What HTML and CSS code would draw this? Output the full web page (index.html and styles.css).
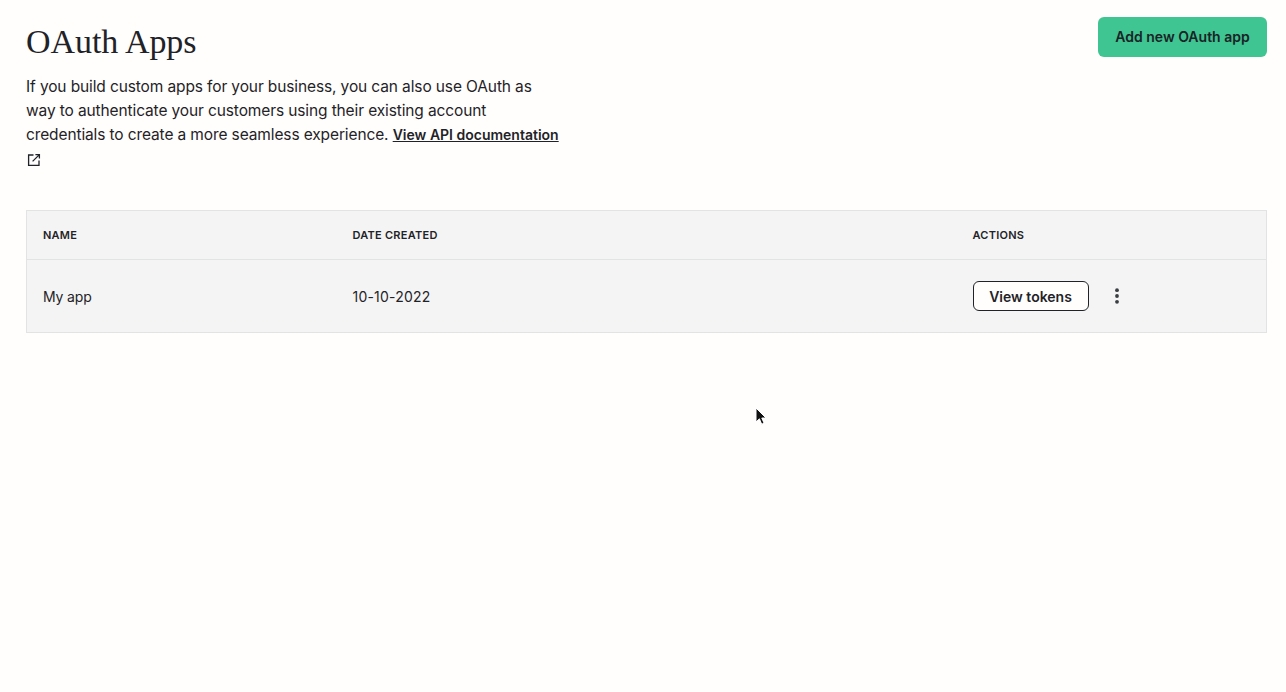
FILE: index.html
```html
<!DOCTYPE html>
<html lang="en">
<head>
<meta charset="utf-8">
<title>OAuth Apps</title>
<link rel="stylesheet" href="styles.css">
</head>
<body>
<main class="page">
  <header class="head">
    <div class="intro">
      <h1 class="title">OAuth Apps</h1>
      <p class="desc">If you build custom apps for your business, you can also use OAuth as way to authenticate your customers using their existing account credentials to create a more seamless experience. <a class="doc-link" href="#">View API documentation</a> <svg class="ext" viewBox="0 0 14 14" width="14" height="14" fill="none" stroke="#1f2327" stroke-width="1.3"><path d="M6.5 2H1.6v10.4h10.4V7.5"/><path d="M5.6 8.4 12.4 1.6M8.4 1.6h4v4"/></svg></p>
    </div>
    <button class="btn-primary">Add new OAuth app</button>
  </header>
  <table class="apps">
    <thead>
      <tr><th class="col-name">Name</th><th class="col-date">Date created</th><th>Actions</th></tr>
    </thead>
    <tbody>
      <tr>
        <td class="name">My app</td>
        <td class="date">10-10-2022</td>
        <td>
          <div class="actions">
            <button class="btn-outline">View tokens</button>
            <svg class="more" viewBox="0 0 4 16" width="4" height="16" fill="#3a3e42"><circle cx="2" cy="2.2" r="1.9"/><circle cx="2" cy="8" r="1.9"/><circle cx="2" cy="13.8" r="1.9"/></svg>
          </div>
        </td>
      </tr>
    </tbody>
  </table>
</main>
<svg class="cursor" viewBox="0 0 12 19" width="12" height="19"><path d="M1 1v14l3.4-3.2 2.3 5.4 2.4-1-2.3-5.2H11z" fill="#111" stroke="#fff" stroke-width="1"/></svg>
</body>
</html>
```
FILE: styles.css
```css
html, body { margin: 0; height: 100%; }
body {
  background: #fffefd;
  color: #1f2327;
  font-family: Inter, "Liberation Sans", sans-serif;
  overflow: hidden;
  position: relative;
}
.page { padding: 17px 19px 0 26px; }
.head { display: flex; justify-content: space-between; align-items: flex-start; }
.intro { width: 536px; }
.title {
  margin: 0;
  padding-top: 2px;
  font-family: "Liberation Serif", serif;
  font-weight: 400;
  font-size: 34px;
  line-height: 46px;
  letter-spacing: -0.05px;
}
.desc { margin: 0; padding-top: 10px; font-size: 15.5px; line-height: 24px; letter-spacing: -0.12px; }
.doc-link { color: #1f2327; font-size: 14px; font-weight: 600; text-decoration: underline; letter-spacing: 0; }
.ext { display: inline-block; vertical-align: -3px; margin: 0 1px; }
.btn-primary {
  width: 169px;
  height: 40px;
  padding: 0;
  border: 0;
  border-radius: 6px;
  background: #3fc591;
  color: #1a2326;
  font: 600 14px/20px Inter, sans-serif;
}
.apps {
  width: 100%;
  margin-top: 39px;
  border: 1px solid #e2e3e3;
  border-collapse: collapse;
  background: #f4f4f4;
  table-layout: fixed;
  font-size: 14px;
}
.col-name { width: 310px; }
.col-date { width: 620px; }
.apps th {
  height: 49px;
  padding: 0 16px;
  box-sizing: border-box;
  border-bottom: 1px solid #e2e3e3;
  text-align: left;
  font-size: 11px;
  font-weight: 600;
  letter-spacing: 0.25px;
  text-transform: uppercase;
}
.apps td { height: 73px; padding: 0 16px; box-sizing: border-box; }
.name { letter-spacing: -0.15px; }
.date { letter-spacing: 0.2px; }
.actions { display: flex; align-items: center; gap: 26px; }
.btn-outline {
  width: 116px;
  height: 30px;
  padding: 1px 0 0;
  border: 1px solid #1f2327;
  border-radius: 6px;
  background: #fffefd;
  color: #1f2327;
  font: 600 14px/20px Inter, sans-serif;
}
.cursor { position: absolute; left: 755px; top: 407px; }
```
